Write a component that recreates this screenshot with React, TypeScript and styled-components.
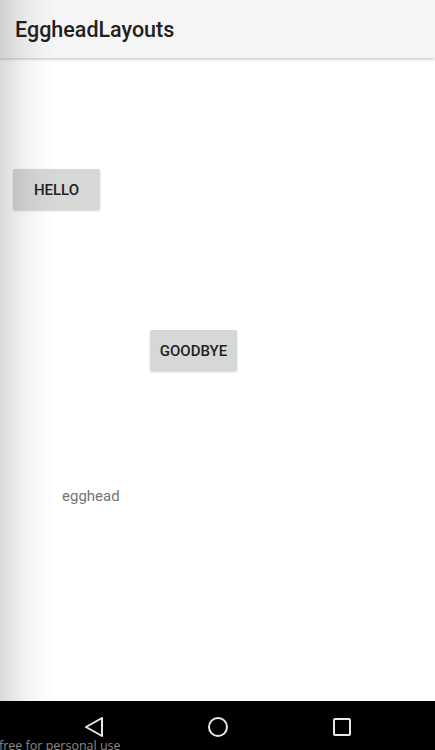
import React from "react";
import styled, { createGlobalStyle } from "styled-components";

const Global = createGlobalStyle`
  html, body { margin: 0; padding: 0; background: #fff; }
  body { font-family: Roboto, "Noto Sans", sans-serif; }
`;

const Screen = styled.div`
  position: relative;
  width: 435px;
  height: 750px;
  display: flex;
  flex-direction: column;
  overflow: hidden;
  background: #fff;
  &::after {
    content: "";
    position: absolute;
    left: 0;
    top: 0;
    bottom: 49px;
    width: 56px;
    pointer-events: none;
    z-index: 2;
    background: linear-gradient(
      to right,
      rgba(0, 0, 0, 0.15) 0%,
      rgba(0, 0, 0, 0.1) 20%,
      rgba(0, 0, 0, 0.05) 45%,
      rgba(0, 0, 0, 0.015) 75%,
      rgba(0, 0, 0, 0) 100%
    );
  }
`;

const AppBar = styled.header`
  height: 58px;
  flex: none;
  display: flex;
  align-items: center;
  padding-left: 15px;
  background: #f5f5f5;
  box-shadow: 0 1px 3px rgba(0, 0, 0, 0.25);
  position: relative;
  z-index: 1;
`;

const Title = styled.h1`
  margin: 0;
  font-size: 21.5px;
  font-weight: 500;
  color: #212121;
`;

const Content = styled.main`
  flex: 1;
  display: flex;
  flex-direction: column;
  align-items: flex-start;
`;

const Button = styled.button<{ $top: number; $left: number }>`
  margin-top: ${(p) => p.$top}px;
  margin-left: ${(p) => p.$left}px;
  height: 41px;
  width: 87px;
  border: none;
  border-radius: 2px;
  background: #d6d7d7;
  box-shadow: 0 1px 2px rgba(0, 0, 0, 0.18);
  font-family: Roboto, sans-serif;
  font-size: 15px;
  font-weight: 500;
  color: #222;
  text-transform: uppercase;
  padding: 0;
`;

const Label = styled.span`
  margin-top: 116px;
  margin-left: 62px;
  font-size: 15px;
  color: #757575;
`;

const NavBar = styled.nav`
  height: 49px;
  flex: none;
  background: #000;
  position: relative;
  display: grid;
  grid-template-columns: repeat(3, 124px);
  align-items: center;
  padding-left: 32px;
`;

const NavSlot = styled.div`
  display: flex;
  justify-content: center;
  padding-top: 2px;
`;

const Watermark = styled.span`
  position: absolute;
  left: -1px;
  bottom: -4px;
  font-family: "Open Sans", sans-serif;
  font-size: 12.5px;
  color: #8a8a8a;
`;

export default function App() {
  return (
    <>
      <Global />
      <Screen>
        <AppBar>
          <Title>EggheadLayouts</Title>
        </AppBar>
        <Content>
          <Button $top={111} $left={13}>Hello</Button>
          <Button $top={120} $left={150}>Goodbye</Button>
          <Label>egghead</Label>
        </Content>
        <NavBar>
          <NavSlot>
            <svg width="20" height="22" viewBox="0 0 20 22">
              <path d="M18 2 L2 11 L18 20 Z" fill="none" stroke="#e8e8e8" strokeWidth="2" strokeLinejoin="round" />
            </svg>
          </NavSlot>
          <NavSlot>
            <svg width="22" height="22" viewBox="0 0 22 22">
              <circle cx="11" cy="11" r="9" fill="none" stroke="#e8e8e8" strokeWidth="2" />
            </svg>
          </NavSlot>
          <NavSlot>
            <svg width="20" height="20" viewBox="0 0 20 20">
              <rect x="2" y="2" width="16" height="16" rx="1" fill="none" stroke="#e8e8e8" strokeWidth="2" />
            </svg>
          </NavSlot>
          <Watermark>free for personal use</Watermark>
        </NavBar>
      </Screen>
    </>
  );
}
